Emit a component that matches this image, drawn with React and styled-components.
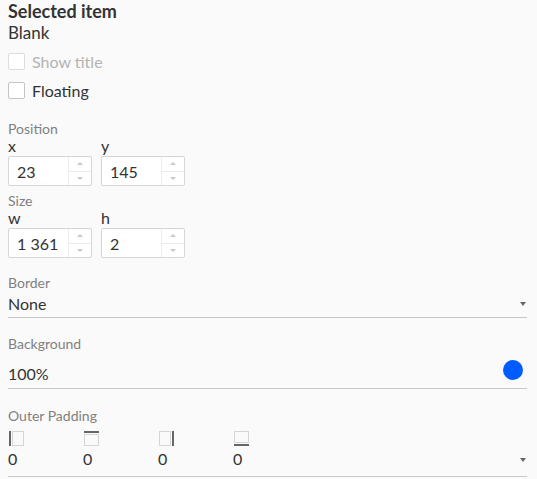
import React from 'react';
import styled, { createGlobalStyle } from 'styled-components';

const Global = createGlobalStyle`
  html, body { margin: 0; background: #fafafa; }
  body { font-family: Lato, "Noto Sans", sans-serif; color: #333; }
  * { box-sizing: border-box; }
`;

const Panel = styled.div`
  padding: 0 10px 0 8px;
  display: flex;
  flex-direction: column;
`;

const Title = styled.div`
  font-size: 18px;
  font-weight: 700;
  line-height: 22px;
`;

const Sub = styled.div`
  font-size: 17px;
  line-height: 22px;
`;

const CheckRow = styled.label`
  display: flex;
  align-items: center;
  height: 17px;
  margin-top: ${p => p.top}px;
  font-size: 16px;
  line-height: 17px;
  color: ${p => (p.disabled ? '#b3b3b3' : '#333')};
`;

const Box = styled.span`
  width: 17px;
  height: 17px;
  border: 1px solid ${p => (p.disabled ? '#dcdcdc' : '#c4c4c4')};
  border-radius: 2px;
  background: #fff;
  margin-right: 7px;
`;

const Label = styled.div`
  font-size: 14px;
  color: #808080;
  line-height: 16px;
  margin-top: ${p => p.top || 0}px;
`;

const Pair = styled.div`
  display: flex;
  gap: 9px;
`;

const Field = styled.div`
  display: flex;
  flex-direction: column;
  gap: 2px;
`;

const Axis = styled.div`
  font-size: 16px;
  line-height: 17px;
`;

const Spinner = styled.div`
  width: 84px;
  height: 30px;
  border: 1px solid #d6d6d6;
  border-radius: 2px;
  background: #fff;
  display: flex;
`;

const SpinValue = styled.div`
  flex: 1;
  font-size: 16px;
  padding-left: 8px;
  display: flex;
  align-items: center;
`;

const Arrows = styled.div`
  width: 23px;
  border-left: 1px solid #ededed;
  display: flex;
  flex-direction: column;
  & > div {
    flex: 1;
    display: flex;
    align-items: center;
    justify-content: center;
  }
  & > div + div { border-top: 1px solid #ededed; }
`;

const Up = styled.span`
  border-left: 3px solid transparent;
  border-right: 3px solid transparent;
  border-bottom: 3px solid #c8c8c8;
`;

const Down = styled.span`
  border-left: 3px solid transparent;
  border-right: 3px solid transparent;
  border-top: 3px solid #c8c8c8;
`;

const Select = styled.div`
  display: flex;
  align-items: center;
  justify-content: space-between;
  border-bottom: 1px solid #c8c8c8;
  height: ${p => p.h}px;
  font-size: 16px;
`;

const Value = styled.span`
  line-height: 20px;
  padding-top: ${p => p.drop || 0}px;
`;

const Caret = styled.span`
  border-left: 3.5px solid transparent;
  border-right: 3.5px solid transparent;
  border-top: 4px solid #666;
  margin-right: 1px;
  margin-bottom: ${p => p.lift || 0}px;
`;

const Dot = styled.span`
  width: 20px;
  height: 20px;
  border-radius: 50%;
  background: #005cff;
  margin-top: -1px;
  margin-right: 4px;
`;

const PadRow = styled.div`
  display: flex;
  align-items: flex-end;
  justify-content: space-between;
  border-bottom: 1px solid #c8c8c8;
  padding-bottom: 9px;
  margin-top: 7px;
`;

const PadCols = styled.div`
  display: flex;
`;

const PadCol = styled.div`
  width: 75px;
  display: flex;
  flex-direction: column;
  gap: 4px;
  font-size: 16px;
  line-height: 17px;
  & > svg { display: block; margin-left: 1px; }
`;

const PadIcon = ({ side }) => (
  <svg width="15" height="15" viewBox="0 0 15 15">
    {side === 'left' && <>
      <rect x="3.5" y="0.5" width="11" height="14" fill="none" stroke="#b0b0b0" strokeDasharray="1 1" />
      <rect x="0" y="0" width="2" height="15" fill="#666" />
    </>}
    {side === 'top' && <>
      <rect x="0.5" y="3.5" width="14" height="11" fill="none" stroke="#b0b0b0" strokeDasharray="1 1" />
      <rect x="0" y="0" width="15" height="2" fill="#666" />
    </>}
    {side === 'right' && <>
      <rect x="0.5" y="0.5" width="11" height="14" fill="none" stroke="#b0b0b0" strokeDasharray="1 1" />
      <rect x="13" y="0" width="2" height="15" fill="#666" />
    </>}
    {side === 'bottom' && <>
      <rect x="0.5" y="0.5" width="14" height="11" fill="none" stroke="#b0b0b0" strokeDasharray="1 1" />
      <rect x="0" y="13" width="15" height="2" fill="#666" />
    </>}
  </svg>
);

const Num = ({ axis, value }) => (
  <Field>
    <Axis>{axis}</Axis>
    <Spinner>
      <SpinValue>{value}</SpinValue>
      <Arrows>
        <div><Up /></div>
        <div><Down /></div>
      </Arrows>
    </Spinner>
  </Field>
);

export default function App() {
  return (
    <>
      <Global />
      <Panel>
        <Title>Selected item</Title>
        <Sub>Blank</Sub>
        <CheckRow disabled top={9}><Box disabled />Show title</CheckRow>
        <CheckRow top={12}><Box />Floating</CheckRow>
        <Label top={22}>Position</Label>
        <Pair>
          <Num axis="x" value="23" />
          <Num axis="y" value="145" />
        </Pair>
        <Label top={7}>Size</Label>
        <Pair>
          <Num axis="w" value="1 361" />
          <Num axis="h" value="2" />
        </Pair>
        <Label top={17}>Border</Label>
        <Select h={27}><Value>None</Value><Caret /></Select>
        <Label top={18}>Background</Label>
        <Select h={37}><Value drop={8}>100%</Value><Dot /></Select>
        <Label top={19}>Outer Padding</Label>
        <PadRow>
          <PadCols>
            {['left', 'top', 'right', 'bottom'].map(s => (
              <PadCol key={s}><PadIcon side={s} />0</PadCol>
            ))}
          </PadCols>
          <Caret lift={5} />
        </PadRow>
      </Panel>
    </>
  );
}
